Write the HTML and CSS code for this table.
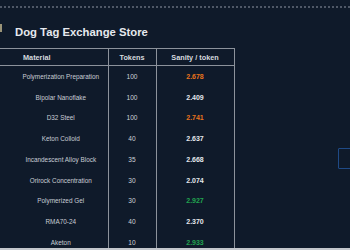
FILE: index.html
```html
<!DOCTYPE html>
<html>
<head>
<meta charset="utf-8">
<link rel="stylesheet" href="styles.css">
</head>
<body>
<div class="viewport">
  <div class="dots"></div>
  <header class="head">
    <svg class="icon" width="10" height="10" viewBox="0 0 10 10"><path d="M1 2 L8 2 L8 8 L1 8" fill="none" stroke="#9a9478" stroke-width="2"/></svg>
    <h1 class="title">Dog Tag Exchange Store</h1>
  </header>
  <table class="store">
    <thead>
      <tr><th class="c-mat">Material</th><th class="c-tok">Tokens</th><th class="c-san">Sanity / token</th></tr>
    </thead>
    <tbody>
      <tr><td class="mat">Polymerization Preparation</td><td class="tok">100</td><td class="san orange">2.678</td></tr>
      <tr><td class="mat">Bipolar Nanoflake</td><td class="tok">100</td><td class="san">2.409</td></tr>
      <tr><td class="mat">D32 Steel</td><td class="tok">100</td><td class="san orange">2.741</td></tr>
      <tr><td class="mat">Keton Colloid</td><td class="tok">40</td><td class="san">2.637</td></tr>
      <tr><td class="mat">Incandescent Alloy Block</td><td class="tok">35</td><td class="san">2.668</td></tr>
      <tr><td class="mat">Orirock Concentration</td><td class="tok">30</td><td class="san">2.074</td></tr>
      <tr><td class="mat">Polymerized Gel</td><td class="tok">30</td><td class="san green">2.927</td></tr>
      <tr><td class="mat">RMA70-24</td><td class="tok">40</td><td class="san">2.370</td></tr>
      <tr><td class="mat">Aketon</td><td class="tok">10</td><td class="san green">2.933</td></tr>
    </tbody>
  </table>
  <div class="side-btn"></div>
</div>
<div class="scrollbar"></div>
</body>
</html>
```
FILE: styles.css
```css
html, body {
  margin: 0;
  padding: 0;
  background: #0f1a2a;
  overflow: hidden;
}
body {
  width: 350px;
  height: 250px;
  font-family: "Liberation Sans", Arial, sans-serif;
  display: flex;
  flex-direction: column;
}
.viewport {
  position: relative;
  height: 248px;
  overflow: hidden;
}
.dots {
  margin-top: 6px;
  height: 0;
  border-top: 2px dotted #4f5867;
}
.head {
  display: flex;
  align-items: center;
  height: 40px;
}
.icon {
  margin-left: -7px;
  margin-top: 0;
  flex: none;
}
.title {
  margin: 0 0 0 12px;
  font-size: 11.3px;
  font-weight: bold;
  color: #e6e9ee;
  line-height: 14px;
  padding-top: 8px;
}
.store {
  border-collapse: collapse;
  width: 233px;
  table-layout: fixed;
}
.store th {
  height: 16px;
  padding: 0;
  font-size: 7.3px;
  font-weight: bold;
  color: #d5d9df;
  border-top: 1px solid #8c929b;
  border-bottom: 1px solid #8c929b;
  text-align: center;
}
.store th + th, .store td + td {
  border-left: 1px solid #8c929b;
}
.store th:last-child, .store td:last-child {
  border-right: 1px solid #8c929b;
}
.c-mat { width: 108px; text-align: left !important; padding-left: 23px !important; box-sizing: border-box; }
.c-tok { width: 47px; }
.c-san { width: 77px; }
.store td {
  height: 20.75px;
  padding: 0;
  font-size: 6.4px;
  color: #c8cdd5;
  text-align: center;
}
.store td.mat {
  padding-left: 14px;
}
.store td.tok {
  font-size: 6.6px;
  color: #cdd1d8;
}
.store td.san {
  font-weight: bold;
  font-size: 7px;
  color: #e4e7ec;
}
.store td.orange { color: #e8731c; }
.store td.green { color: #21a350; }
.side-btn {
  position: absolute;
  left: 338px;
  top: 148px;
  width: 20px;
  height: 19px;
  border: 1.5px solid #1f4a86;
  border-radius: 1px;
}
.scrollbar {
  height: 2px;
  background: #c3c7cc;
}
```
